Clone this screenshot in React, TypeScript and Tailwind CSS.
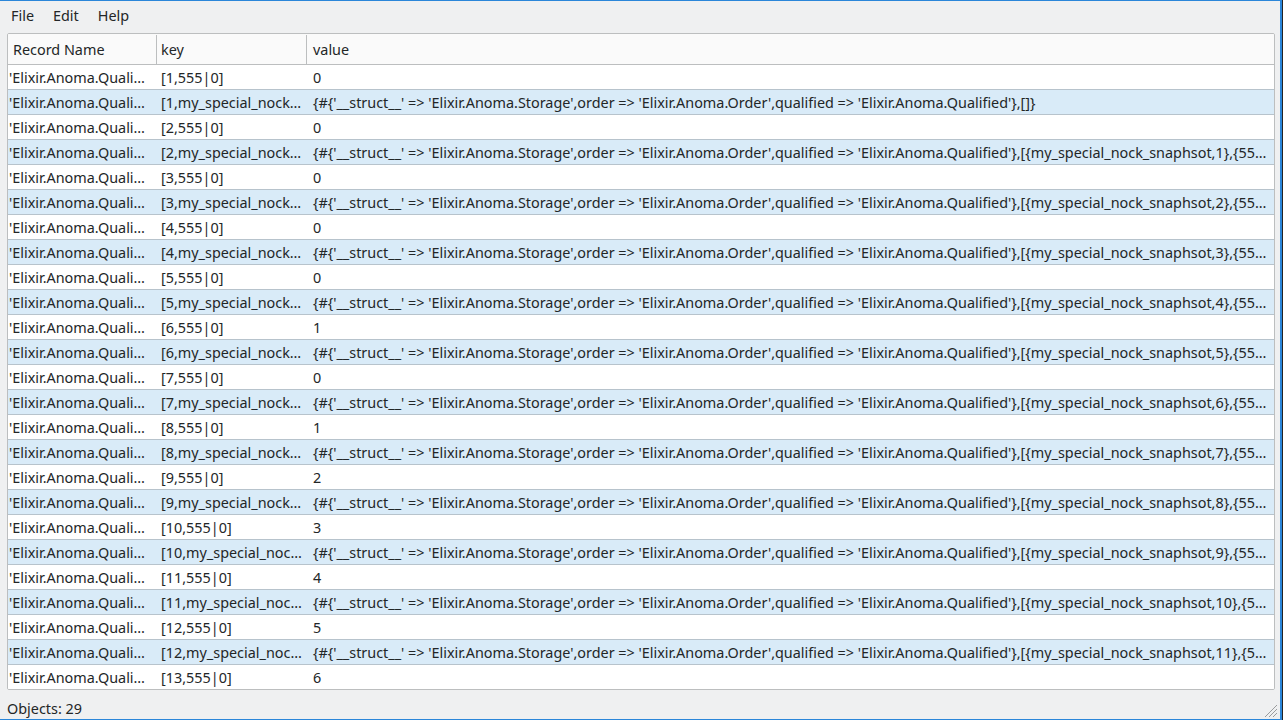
import React from 'react';

type Row = { name: string; key: string; value: string };

const values555 = [0, 0, 0, 0, 0, 1, 0, 1, 2, 3, 4, 5, 6];
const struct =
  "{#{'__struct__' => 'Elixir.Anoma.Storage',order => 'Elixir.Anoma.Order',qualified => 'Elixir.Anoma.Qualified'}";

const rows: Row[] = [];
for (let n = 1; n <= 13; n++) {
  rows.push({ name: "'Elixir.Anoma.Qualified'", key: `[${n},555|0]`, value: String(values555[n - 1]) });
  if (n < 13) {
    rows.push({
      name: "'Elixir.Anoma.Qualified'",
      key: `[${n},my_special_nock_snaphsot|0]`,
      value:
        n === 1
          ? `${struct},[]}`
          : `${struct},[{my_special_nock_snaphsot,${n - 1}},{555,${n - 1}},{my_special_nock_snaphsot,${n}}]}`,
    });
  }
}

const menus = ['File', 'Edit', 'Help'];

function Grip() {
  return (
    <svg width="14" height="14" viewBox="0 0 14 14" className="text-[#9a9c9e]">
      <path d="M13 1 L1 13 M13 5 L5 13 M13 9 L9 13" stroke="currentColor" strokeWidth="1" fill="none" />
    </svg>
  );
}

export default function App() {
  return (
    <div className="flex w-[1283px] h-[720px] overflow-hidden font-['Noto_Sans',sans-serif] text-[14.4px] text-[#232627]">
      <div className="flex flex-col flex-1 min-w-0 bg-[#eff0f1] border-t border-b border-r-2 border-[#2a86d9]">
        {/* menu bar */}
        <div className="flex items-center h-[29px] pl-[11px] gap-[19px]">
          {menus.map((m) => (
            <span key={m}>{m}</span>
          ))}
        </div>

        {/* table */}
        <div className="flex flex-col ml-[7px] mr-[5px] mt-[3px] h-[657px] bg-white border border-[#bcbebf] rounded-[2px] overflow-hidden">
          <div className="flex h-[31px] shrink-0 pt-[1px] bg-[#fafafa] border-b border-[#bcbebf]">
            <div className="w-[149px] pl-[5px] flex items-center border-r border-[#bcbebf]">Record Name</div>
            <div className="w-[150px] pl-[4px] flex items-center border-r border-[#bcbebf]">key</div>
            <div className="flex-1 pl-[6px] flex items-center">value</div>
          </div>
          {rows.map((r, i) => (
            <div
              key={i}
              className={
                'flex h-[25px] shrink-0 items-center pt-[1px] border-b border-[#b7c3cc] ' +
                (i % 2 === 1 ? 'bg-[#d9ebf8]' : 'bg-white')
              }
            >
              <div className="w-[149px] pl-[1px] pr-[4px] truncate">{r.name}</div>
              <div className="w-[150px] pl-[4px] pr-[5px] truncate">{r.key}</div>
              <div className="flex-1 min-w-0 pl-[6px] pr-[4px] truncate">{r.value}</div>
            </div>
          ))}
        </div>

        {/* status bar */}
        <div className="flex items-end justify-between flex-1 pl-[7px] pr-[2px]">
          <span className="mb-[-1px]">Objects: 29</span>
          <div className="mb-[1px]">
            <Grip />
          </div>
        </div>
      </div>
      <div className="w-[1px] bg-[#232323]" />
    </div>
  );
}
